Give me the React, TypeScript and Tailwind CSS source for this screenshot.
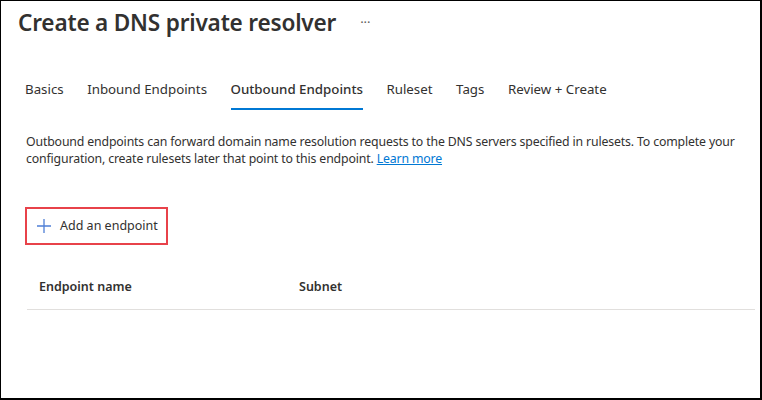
import React from 'react';

const tabs = ['Basics', 'Inbound Endpoints', 'Outbound Endpoints', 'Ruleset', 'Tags', 'Review + Create'];

const App = () => {
  return (
    <div
      className="w-[762px] h-[400px] bg-white border-t border-l border-r-2 border-b-2 border-black overflow-hidden text-[#323130]"
      style={{ fontFamily: '"Noto Sans", "Open Sans", sans-serif' }}
    >
      {/* Header */}
      <div className="flex items-center pl-[17px] pt-[7px] h-[37px]">
        <h1 className="text-[22.6px] font-semibold leading-[30px] tracking-[-0.2px]">Create a DNS private resolver</h1>
        <span className="ml-[24px] text-[13px] text-[#605e5c] leading-none -mt-[2px]">···</span>
      </div>

      {/* Tabs */}
      <div className="flex pl-[24px] mt-[36px] gap-[23.5px] text-[13.3px]">
        {tabs.map((t) => (
          <div key={t} className="relative h-[42px] flex items-start pt-[6px]">
            <span className={t === 'Outbound Endpoints' ? 'font-medium text-[#323130]' : 'text-[#323130]'}>{t}</span>
            {t === 'Outbound Endpoints' && (
              <div className="absolute left-0 right-0 top-[34px] h-[2px] bg-[#0078d4]" />
            )}
          </div>
        ))}
      </div>

      {/* Description */}
      <p className="pl-[25px] pr-[4px] mt-[17px] text-[12.3px] leading-[17px] tracking-[-0.15px] text-[#323130] whitespace-nowrap">
        Outbound endpoints can forward domain name resolution requests to the DNS servers specified in rulesets. To complete your
        <br />
        configuration, create rulesets later that point to this endpoint.{' '}
        <a className="text-[#0078d4] underline">Learn more</a>
      </p>

      {/* Add button */}
      <div className="pl-[24px] mt-[40px]">
        <div className="inline-flex items-center w-[143px] h-[38px] border-2 border-[#e8424a] pl-[9px] gap-[8px]">
          <svg width="16" height="16" viewBox="0 0 16 16">
            <path d="M8 1v14M1 8h14" stroke="#4f7fd6" strokeWidth="1.3" fill="none" />
          </svg>
          <span className="text-[12.5px]">Add an endpoint</span>
        </div>
      </div>

      {/* Table header */}
      <div className="ml-[26px] mr-[5px] mt-[33px] border-b border-[#e1dfdd] flex h-[32px] items-start text-[12.5px] font-semibold">
        <div className="pl-[12px] w-[272px]">Endpoint name</div>
        <div>Subnet</div>
      </div>
    </div>
  );
};

export default App;
